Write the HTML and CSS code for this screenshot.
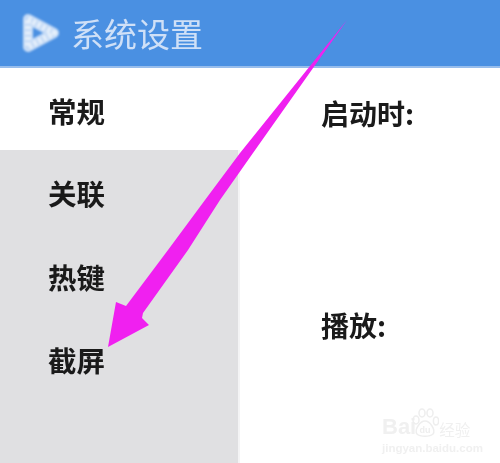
FILE: index.html
```html
<!DOCTYPE html>
<html lang="zh">
<head>
<meta charset="utf-8">
<title>系统设置</title>
<link rel="stylesheet" href="styles.css">
</head>
<body>
<div class="app">
  <header class="header">
    <svg class="logo" viewBox="0 0 38 40" width="38" height="40">
      <path d="M6 6 L32 20 L6 34 Z" fill="none" stroke="#c6dbf6" stroke-width="10" stroke-linejoin="round"/>
      <path d="M6 6 L32 20 L6 34 Z" fill="none" stroke="#e6f0fb" stroke-width="6" stroke-linejoin="round" stroke-dasharray="3 2.5"/>
    </svg>
    <span class="title">系统设置</span>
  </header>
  <div class="body">
    <nav class="nav">
      <div class="nav-item active">常规</div>
      <div class="nav-item">关联</div>
      <div class="nav-item">热键</div>
      <div class="nav-item">截屏</div>
    </nav>
    <main class="main">
      <div class="section startup">启动时:</div>
      <div class="section">播放:</div>
    </main>
  </div>
  <svg class="arrow" viewBox="0 0 500 463" width="500" height="463">
    <path d="M347 20 L253 153 L220 200 L188 250 L143 313 L142 318 L149 325 L108 347 L116 302 L126 306 L168 250 L205 200 L240 153 Z" fill="#f020f0"/>
  </svg>
  <div class="watermark">
    <div class="wm-top">
      <span class="wm-bai">Bai</span>
      <svg class="wm-paw" viewBox="0 0 28 30" width="28" height="30">
        <g fill="none" stroke="#eeeeee" stroke-width="1.5">
          <ellipse cx="5" cy="12" rx="3" ry="4"/>
          <ellipse cx="11" cy="5" rx="3" ry="4"/>
          <ellipse cx="19" cy="5" rx="3" ry="4"/>
          <ellipse cx="25" cy="13" rx="2.6" ry="4"/>
          <path d="M14 13 C9 13 3 22 6 26 C9 29 19 29 22 26 C25 22 19 13 14 13 Z"/>
        </g>
        <text x="14" y="25" font-size="9" font-weight="700" text-anchor="middle" fill="#eeeeee" font-family="Liberation Sans">du</text>
      </svg>
      <span class="wm-jy">经验</span>
    </div>
    <div class="wm-url">jingyan.baidu.com</div>
  </div>
</div>
</body>
</html>
```
FILE: styles.css
```css
html, body {
  margin: 0;
  padding: 0;
  background: #fff;
}
.app {
  position: relative;
  width: 500px;
  height: 463px;
  overflow: hidden;
  font-family: "Noto Sans CJK SC", "Liberation Sans", sans-serif;
}
.header {
  box-sizing: border-box;
  height: 68px;
  background: #4a90e2;
  border-bottom: 2px solid #97bdec;
  display: flex;
  align-items: center;
  padding-left: 22px;
  gap: 11px;
}
.logo {
  flex: none;
  filter: blur(1px);
}
.title {
  font-size: 33px;
  line-height: 1;
  color: #cfe0f7;
  filter: blur(0.6px);
}
.body {
  display: flex;
  height: 395px;
}
.nav {
  width: 238px;
  background: #e0e0e2;
  border-right: 2px solid #f4f4f5;
  flex: none;
}
.nav-item {
  height: 83.5px;
  box-sizing: border-box;
  padding: 2px 0 0 48px;
  display: flex;
  align-items: center;
  font-size: 28.5px;
  font-weight: 700;
  color: #1a1a1a;
  filter: blur(0.5px);
}
.nav-item.active {
  height: 82px;
  background: #fff;
  margin-right: -2px;
}
.main {
  flex: 1;
  padding: 25px 0 0 81px;
  font-size: 28px;
  font-weight: 700;
  color: #1a1a1a;
}
.section {
  line-height: 40px;
  filter: blur(0.5px);
}
.startup {
  margin-bottom: 172px;
}
.arrow {
  position: absolute;
  left: 0;
  top: 0;
}
.watermark {
  position: absolute;
  left: 382px;
  top: 407px;
  color: #f0f0f0;
  font-family: "Liberation Sans", "Noto Sans CJK SC", sans-serif;
  filter: blur(0.6px);
}
.wm-top {
  display: flex;
  align-items: flex-end;
  height: 31px;
}
.wm-bai {
  font-size: 22px;
  font-weight: 700;
  line-height: 22px;
}
.wm-paw {
  margin-left: -5px;
}
.wm-jy {
  font-size: 15.5px;
  line-height: 18px;
  font-family: "Noto Sans CJK SC", sans-serif;
}
.wm-url {
  font-size: 11.5px;
  font-weight: 700;
  line-height: 14px;
  margin-top: 3px;
}
```
